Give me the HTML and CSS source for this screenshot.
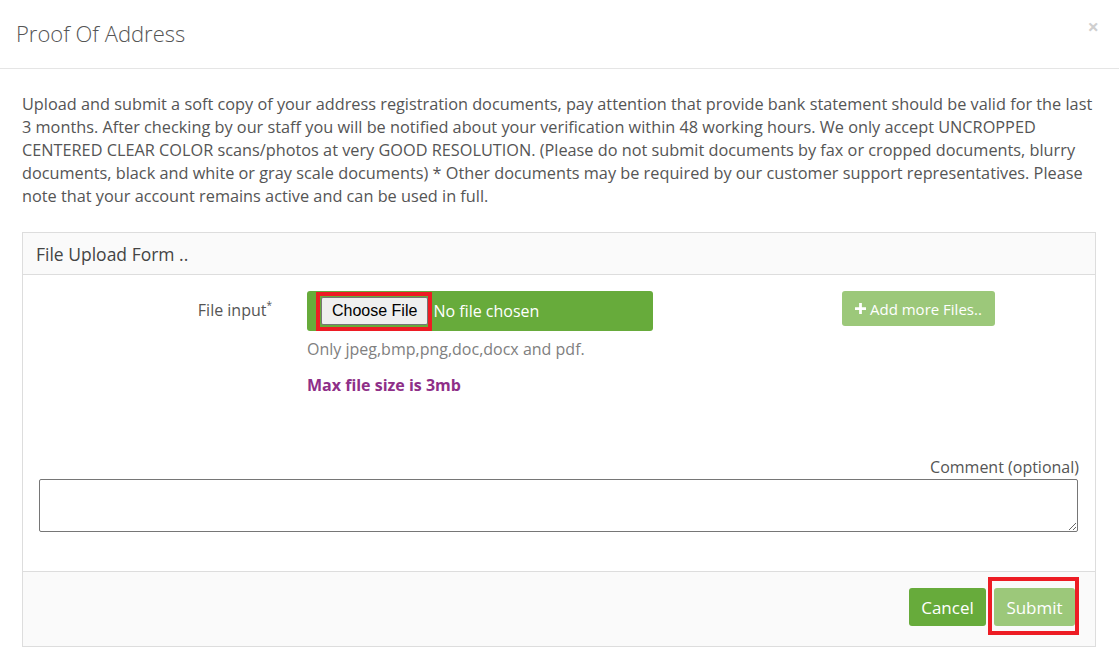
FILE: index.html
```html
<!DOCTYPE html>
<html lang="en" dir="ltr">
<head>
    <meta charset="utf-8">
    <title>Proof Of Address</title>
    <link rel="stylesheet" href="styles.css">
</head>
<body>
<div class="modal">
    <div class="modal-header">
        <h4 class="modal-title">Proof Of Address</h4>
        <button type="button" class="close">&times;</button>
    </div>
    <div class="modal-body">
        <p class="intro">
            Upload and submit a soft copy of your address registration documents, pay attention that provide bank statement should be valid for the last 3 months. After checking by our staff you will be notified about your verification within 48 working hours. We only accept UNCROPPED CENTERED CLEAR COLOR scans/photos at very GOOD RESOLUTION. (Please do not submit documents by fax or cropped documents, blurry documents, black and white or gray scale documents) * Other documents may be required by our customer support representatives. Please note that your account remains active and can be used in full.
        </p>
        <form class="panel" action="#">
            <div class="panel-heading">File Upload Form ..</div>
            <div class="panel-body">
                <div class="file-row">
                    <label class="file-label">File input<sup>*</sup></label>
                    <div class="file-col">
                        <div class="file-box">
                            <span class="file-btn">Choose File</span>
                            <span class="file-name">No file chosen</span>
                        </div>
                        <p class="help">Only jpeg,bmp,png,doc,docx and pdf.</p>
                        <p class="max-size">Max file size is 3mb</p>
                    </div>
                    <div class="add-col">
                        <button type="button" class="btn btn-add">
                            <svg width="11" height="11" viewBox="0 0 12 12"><path d="M4.5 0h3v4.5H12v3H7.5V12h-3V7.5H0v-3h4.5z" fill="#fff"/></svg>
                            Add more Files..
                        </button>
                    </div>
                </div>
                <div class="comment">
                    <label class="comment-label">Comment (optional)</label>
                    <textarea class="comment-input"></textarea>
                </div>
            </div>
            <div class="panel-footer">
                <button type="button" class="btn btn-cancel">Cancel</button>
                <button type="submit" class="btn btn-submit">Submit</button>
            </div>
        </form>
    </div>
</div>
</body>
</html>
```

FILE: styles.css
```css
*{
    margin:0;
    padding:0;
    box-sizing:border-box;
    font-family:'Open Sans', sans-serif;
}
body{
    background:#fff;
    color:#555;
}
.modal{
    width:1119px;
}
.modal-header{
    height:69px;
    padding:0 16px;
    display:flex;
    align-items:center;
    justify-content:space-between;
    border-bottom:1px solid #e5e5e5;
}
.modal-title{
    font-size:22px;
    font-weight:300;
    color:#555;
    margin-top:-3px;
}
.close{
    border:none;
    background:none;
    font-size:20px;
    font-weight:700;
    color:#cfcfcf;
    line-height:1;
    margin-top:-14px;
    margin-right:4px;
}
.modal-body{
    padding:24px 22px 0;
}
.intro{
    font-size:16.3px;
    line-height:23px;
    color:#555;
}
.panel{
    margin-top:24px;
    width:1074px;
    border:1px solid #ddd;
}
.panel-heading{
    height:42px;
    padding:0 13px;
    display:flex;
    align-items:center;
    font-size:17.5px;
    color:#444;
    background:#fafafa;
    border-bottom:1px solid #ddd;
}
.panel-body{
    padding:16px 16px 39px;
}
.file-row{
    display:grid;
    grid-template-columns:233px 346px 1fr;
    column-gap:35px;
}
.file-label{
    text-align:right;
    font-size:16px;
    line-height:38px;
    color:#555;
}
.file-label sup{
    font-size:10px;
    vertical-align:top;
    line-height:28px;
}
.file-box{
    height:40px;
    background:#67ab3b;
    border-radius:3px;
    display:flex;
    align-items:center;
    padding-left:14px;
}
.file-btn{
    position:relative;
    font-family:'Liberation Sans', Arial, sans-serif;
    font-size:16px;
    color:#000;
    background:#efefef;
    border:1px solid #767676;
    border-radius:2px;
    padding:3px 10px;
    line-height:20px;
}
.file-btn::after,
.btn-submit::after{
    content:'';
    position:absolute;
    border:4px solid #ed1c24;
}
.file-btn::after{
    inset:-6px -5px -7px -6px;
}
.file-name{
    font-size:16px;
    color:#fff;
    margin-left:5px;
}
.help{
    margin-top:7px;
    font-size:16px;
    line-height:22px;
    color:#808080;
}
.max-size{
    margin-top:14px;
    font-size:16px;
    font-weight:700;
    line-height:22px;
    color:#8e2f88;
}
.add-col{
    padding-left:154px;
}
.btn{
    border:none;
    border-radius:3px;
    color:#fff;
    cursor:pointer;
}
.btn-add{
    height:35px;
    padding:0 13px;
    background:#9cc87a;
    font-size:15px;
    display:flex;
    align-items:center;
    gap:4px;
}
.comment{
    margin-top:60px;
}
.comment-label{
    display:block;
    text-align:right;
    font-size:16px;
    line-height:22px;
    color:#555;
    margin-bottom:1px;
}
.comment-input{
    display:block;
    width:1039px;
    height:53px;
    border:1px solid #767676;
    border-radius:2px;
    resize:vertical;
}
.panel-footer{
    display:flex;
    justify-content:flex-end;
    gap:8px;
    padding:16px 20px 20px;
    background:#fafafa;
    border-top:1px solid #ddd;
}
.btn-cancel,
.btn-submit{
    height:38px;
    font-size:17px;
    position:relative;
}
.btn-cancel{
    width:77px;
    background:#67ab3b;
}
.btn-submit{
    width:81px;
    background:#9cc87a;
}
.btn-submit::after{
    inset:-11px -4px -9px -6px;
}
```
